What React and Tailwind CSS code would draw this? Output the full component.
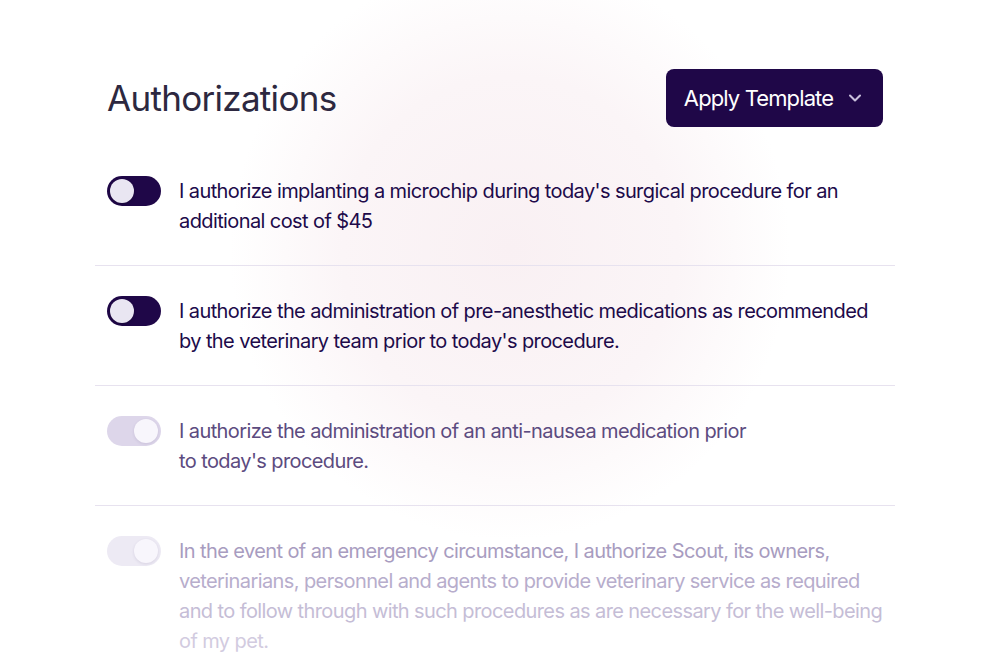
import { ChevronDown } from 'lucide-react';

const items = [
  {
    lines: ["I authorize implanting a microchip during today's surgical procedure for an", 'additional cost of $45'],
    state: 'dark',
  },
  {
    lines: [
      'I authorize the administration of pre-anesthetic medications as recommended',
      "by the veterinary team prior to today's procedure.",
    ],
    state: 'dark',
  },
  {
    lines: ['I authorize the administration of an anti-nausea medication prior', "to today's procedure."],
    state: 'mid',
  },
  {
    lines: [
      'In the event of an emergency circumstance, I authorize Scout, its owners,',
      'veterinarians, personnel and agents to provide veterinary service as required',
      'and to follow through with such procedures as are necessary for the well-being',
      'of my pet.',
    ],
    state: 'faint',
  },
];

const Toggle = ({ state }) => {
  if (state === 'dark') {
    return (
      <span className="flex h-[30px] w-[54px] shrink-0 items-center rounded-full bg-[#1f0748] p-[3px]">
        <span className="size-[24px] rounded-full bg-[#e9e6f2] shadow-[0_1px_3px_rgba(0,0,0,0.25)]" />
      </span>
    );
  }
  return (
    <span
      className={
        state === 'mid'
          ? 'flex h-[30px] w-[54px] shrink-0 items-center justify-end rounded-full bg-[#ddd6ea] p-[3px]'
          : 'flex h-[30px] w-[54px] shrink-0 items-center justify-end rounded-full bg-[#edeaf4] p-[3px]'
      }
    >
      <span className="size-[24px] rounded-full bg-[#f8f6fc] shadow-[0_1px_3px_rgba(60,40,100,0.12)]" />
    </span>
  );
};

const lineColor = (state, i) => {
  if (state === 'dark') return 'text-[#200a4a]';
  if (state === 'mid') return 'text-[#5c4b80]';
  return ['text-[#a89cc0]', 'text-[#b7adcc]', 'text-[#c5bdd6]', 'text-[#d2cbe0]'][i];
};

export default function App() {
  return (
    <div className="h-[668px] w-full overflow-hidden bg-white bg-[radial-gradient(ellipse_280px_290px_at_510px_250px,#f9f0f3_0%,#fbf5f7_60%,#ffffff_100%)] font-['Inter',sans-serif]">
      <div className="mx-auto w-[800px] pt-[69px]">
        <header className="flex items-center justify-between pl-3 pr-3">
          <h1 className="text-[35px] font-normal tracking-[-0.02em] text-[#2d2840]">Authorizations</h1>
          <button
            type="button"
            className="flex h-[58px] w-[217px] items-center justify-center gap-3 rounded-lg bg-[#1f0748] text-[22px] tracking-[-0.04em] text-white"
          >
            Apply Template
            <ChevronDown size={20} strokeWidth={2.5} className="text-[#c9c0dc]" />
          </button>
        </header>

        <ul className="mt-[19px]">
          {items.map((item, idx) => (
            <li
              key={idx}
              className={
                idx === items.length - 1
                  ? 'flex items-start gap-[18px] px-3 pt-[30px]'
                  : 'flex items-start gap-[18px] border-b border-[#e7e2ef] px-3 pt-[30px] pb-[29px]'
              }
            >
              <Toggle state={item.state} />
              <p className="whitespace-nowrap text-[20px] leading-[30px] tracking-[-0.03em]">
                {item.lines.map((line, i) => (
                  <span key={i} className={`block ${lineColor(item.state, i)}`}>
                    {line}
                  </span>
                ))}
              </p>
            </li>
          ))}
        </ul>
      </div>
    </div>
  );
}
